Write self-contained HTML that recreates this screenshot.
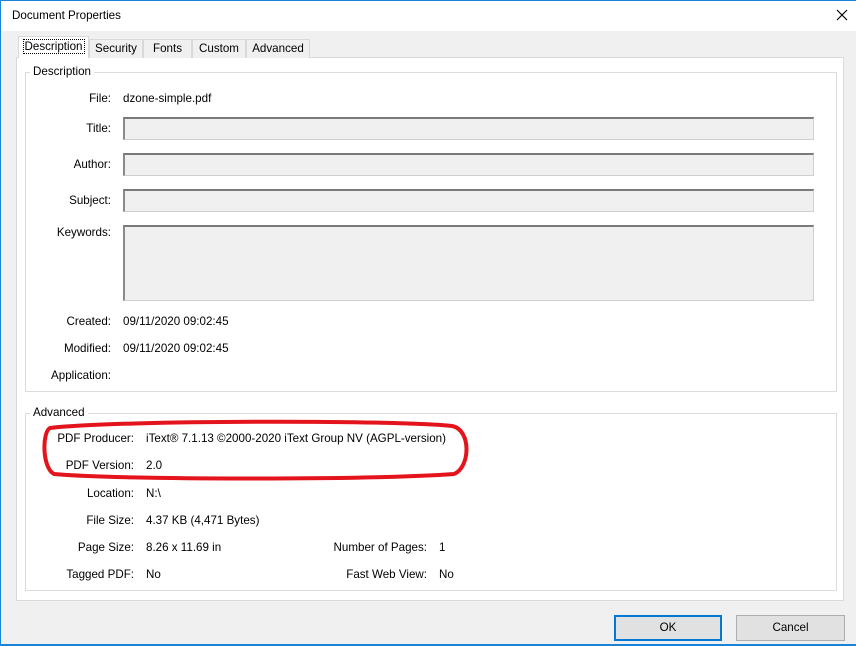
<!DOCTYPE html>
<html><head><style>
*{box-sizing:border-box;margin:0;padding:0}
body{width:856px;height:646px;background:#f0f0f0;font:11.6px "Liberation Sans",sans-serif;color:#000;position:relative;overflow:hidden}
.a{position:absolute}
.lbl{position:absolute;text-align:right;white-space:nowrap}
.val{position:absolute;white-space:nowrap}
.fld{position:absolute;left:123px;width:691px;background:#f0f0f0;border:1px solid #cfcfcf;border-top:2px solid #7a7a7a;border-left:2px solid #8a8a8a}
.tab{position:absolute;top:39px;height:19px;background:#f0f0f0;border:1px solid #d9d9d9;border-bottom:none;text-align:center;line-height:17px}
.grp{position:absolute;border:1px solid #dcdcdc}
.gt{position:absolute;background:#fff;padding:0 3px;line-height:14px}
.btn{position:absolute;top:615px;height:26px;background:#e1e1e1;border:1px solid #adadad;text-align:center;line-height:24px}
</style></head><body>
<div class="a" style="left:0;top:0;width:856px;height:31px;background:#fff;border-top:1px solid #1883d7"></div>
<div class="a" style="left:0;top:0;width:1px;height:646px;background:#1883d7"></div>
<div class="a" style="left:0;top:644px;width:856px;height:2px;background:#1883d7"></div>
<div class="val" style="left:12px;top:9px">Document Properties</div>
<svg class="a" style="left:836px;top:9px" width="12" height="12"><path d="M1 1L11 11M11 1L1 11" stroke="#000" stroke-width="1.2"/></svg>

<div class="a" style="left:16px;top:57px;width:828px;height:544px;background:#fff;border:1px solid #d9d9d9"></div>
<div class="tab" style="left:89px;width:54px">Security</div>
<div class="tab" style="left:143px;width:49px">Fonts</div>
<div class="tab" style="left:192px;width:54px">Custom</div>
<div class="tab" style="left:246px;width:64px">Advanced</div>
<div class="tab" style="left:18px;top:36px;height:22px;width:71px;background:#fff;line-height:20px"><span style="outline:1px dotted #000;padding:0 1px">Description</span></div>

<div class="grp" style="left:25px;top:72px;width:812px;height:320px"></div>
<div class="gt" style="left:30px;top:65px">Description</div>
<div class="lbl" style="right:745px;top:92px">File:</div>
<div class="val" style="left:123px;top:92px">dzone-simple.pdf</div>
<div class="lbl" style="right:745px;top:122px">Title:</div>
<div class="fld" style="top:117px;height:23px"></div>
<div class="lbl" style="right:745px;top:158px">Author:</div>
<div class="fld" style="top:153px;height:23px"></div>
<div class="lbl" style="right:745px;top:194px">Subject:</div>
<div class="fld" style="top:189px;height:23px"></div>
<div class="lbl" style="right:745px;top:226px">Keywords:</div>
<div class="fld" style="top:225px;height:76px"></div>
<div class="lbl" style="right:745px;top:315px">Created:</div>
<div class="val" style="left:123px;top:315px">09/11/2020 09:02:45</div>
<div class="lbl" style="right:745px;top:342px">Modified:</div>
<div class="val" style="left:123px;top:342px">09/11/2020 09:02:45</div>
<div class="lbl" style="right:745px;top:369px">Application:</div>

<div class="grp" style="left:25px;top:413px;width:812px;height:178px"></div>
<div class="gt" style="left:30px;top:406px">Advanced</div>
<div class="lbl" style="right:722px;top:432px">PDF Producer:</div>
<div class="val" style="left:146px;top:432px">iText® 7.1.13 ©2000-2020 iText Group NV (AGPL-version)</div>
<div class="lbl" style="right:722px;top:459px">PDF Version:</div>
<div class="val" style="left:146px;top:459px">2.0</div>
<div class="lbl" style="right:722px;top:487px">Location:</div>
<div class="val" style="left:146px;top:487px">N:\</div>
<div class="lbl" style="right:722px;top:514px">File Size:</div>
<div class="val" style="left:146px;top:514px">4.37 KB (4,471 Bytes)</div>
<div class="lbl" style="right:722px;top:541px">Page Size:</div>
<div class="val" style="left:146px;top:541px">8.26 x 11.69 in</div>
<div class="lbl" style="right:722px;top:568px">Tagged PDF:</div>
<div class="val" style="left:146px;top:568px">No</div>
<div class="lbl" style="right:429px;top:541px">Number of Pages:</div>
<div class="val" style="left:439px;top:541px">1</div>
<div class="lbl" style="right:429px;top:568px">Fast Web View:</div>
<div class="val" style="left:439px;top:568px">No</div>

<svg class="a" style="left:40px;top:418px" width="436" height="66"><path d="M10 10 C80 2 360 2 412 8 C432 12 430 50 414 56 C330 62 80 62 14 56 C2 50 2 14 10 10Z" fill="none" stroke="#e3141c" stroke-width="4"/></svg>

<div class="btn" style="left:614px;width:108px;border:2px solid #0078d7;line-height:22px">OK</div>
<div class="btn" style="left:736px;width:109px">Cancel</div>
</body></html>
